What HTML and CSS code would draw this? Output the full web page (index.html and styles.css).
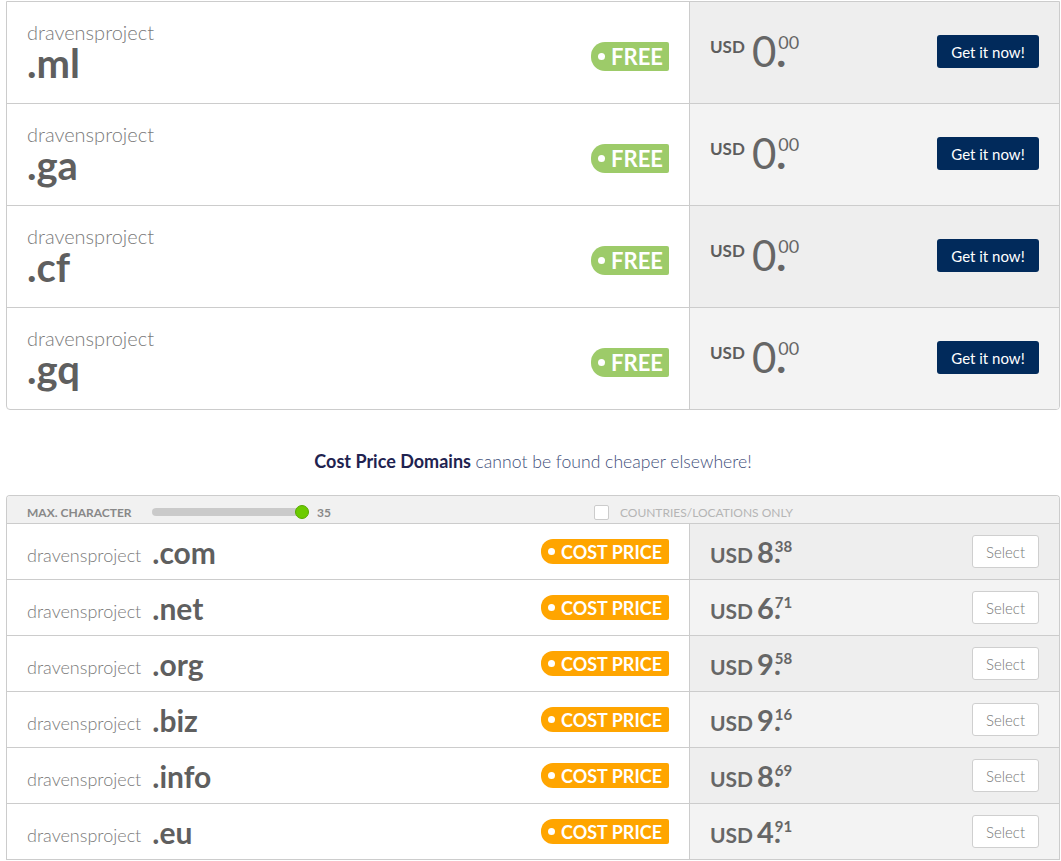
FILE: index.html
```html
<!DOCTYPE html>
<html lang="en">
<head>
<meta charset="utf-8">
<title>Domains</title>
<link rel="stylesheet" href="styles.css">
</head>
<body>
<div class="page">
  <div class="free-list">
    <div class="row">
      <div class="info">
        <div class="name"><div class="sld">dravensproject</div><div class="tld">.ml</div></div>
        <span class="badge badge-free"><i class="dot"></i>FREE</span>
      </div>
      <div class="buy">
        <div class="price price-lg"><span class="cur">USD</span><span class="int">0</span><span class="dec">.</span><span class="cents">00</span></div>
        <button class="btn-get">Get it now!</button>
      </div>
    </div>
    <div class="row">
      <div class="info">
        <div class="name"><div class="sld">dravensproject</div><div class="tld">.ga</div></div>
        <span class="badge badge-free"><i class="dot"></i>FREE</span>
      </div>
      <div class="buy">
        <div class="price price-lg"><span class="cur">USD</span><span class="int">0</span><span class="dec">.</span><span class="cents">00</span></div>
        <button class="btn-get">Get it now!</button>
      </div>
    </div>
    <div class="row">
      <div class="info">
        <div class="name"><div class="sld">dravensproject</div><div class="tld">.cf</div></div>
        <span class="badge badge-free"><i class="dot"></i>FREE</span>
      </div>
      <div class="buy">
        <div class="price price-lg"><span class="cur">USD</span><span class="int">0</span><span class="dec">.</span><span class="cents">00</span></div>
        <button class="btn-get">Get it now!</button>
      </div>
    </div>
    <div class="row">
      <div class="info">
        <div class="name"><div class="sld">dravensproject</div><div class="tld">.gq</div></div>
        <span class="badge badge-free"><i class="dot"></i>FREE</span>
      </div>
      <div class="buy">
        <div class="price price-lg"><span class="cur">USD</span><span class="int">0</span><span class="dec">.</span><span class="cents">00</span></div>
        <button class="btn-get">Get it now!</button>
      </div>
    </div>
  </div>

  <p class="note"><strong>Cost Price Domains</strong> <span class="rest">cannot be found cheaper elsewhere!</span></p>

  <div class="cost-list">
    <div class="filters">
      <span class="flabel">MAX. CHARACTER</span>
      <span class="slider"><span class="track"></span><span class="handle"></span></span>
      <span class="fval">35</span>
      <span class="check"><span class="box"></span><span class="clabel">COUNTRIES/LOCATIONS ONLY</span></span>
    </div>
    <div class="crow">
      <div class="cinfo">
        <div class="cname"><span class="csld">dravensproject</span><span class="ctld">.com</span></div>
        <span class="badge badge-cost"><i class="dot"></i>COST PRICE</span>
      </div>
      <div class="cbuy">
        <div class="price price-sm"><span class="cur">USD</span><span class="int">8</span><span class="dec">.</span><span class="cents">38</span></div>
        <button class="btn-select">Select</button>
      </div>
    </div>
    <div class="crow">
      <div class="cinfo">
        <div class="cname"><span class="csld">dravensproject</span><span class="ctld">.net</span></div>
        <span class="badge badge-cost"><i class="dot"></i>COST PRICE</span>
      </div>
      <div class="cbuy">
        <div class="price price-sm"><span class="cur">USD</span><span class="int">6</span><span class="dec">.</span><span class="cents">71</span></div>
        <button class="btn-select">Select</button>
      </div>
    </div>
    <div class="crow">
      <div class="cinfo">
        <div class="cname"><span class="csld">dravensproject</span><span class="ctld">.org</span></div>
        <span class="badge badge-cost"><i class="dot"></i>COST PRICE</span>
      </div>
      <div class="cbuy">
        <div class="price price-sm"><span class="cur">USD</span><span class="int">9</span><span class="dec">.</span><span class="cents">58</span></div>
        <button class="btn-select">Select</button>
      </div>
    </div>
    <div class="crow">
      <div class="cinfo">
        <div class="cname"><span class="csld">dravensproject</span><span class="ctld">.biz</span></div>
        <span class="badge badge-cost"><i class="dot"></i>COST PRICE</span>
      </div>
      <div class="cbuy">
        <div class="price price-sm"><span class="cur">USD</span><span class="int">9</span><span class="dec">.</span><span class="cents">16</span></div>
        <button class="btn-select">Select</button>
      </div>
    </div>
    <div class="crow">
      <div class="cinfo">
        <div class="cname"><span class="csld">dravensproject</span><span class="ctld">.info</span></div>
        <span class="badge badge-cost"><i class="dot"></i>COST PRICE</span>
      </div>
      <div class="cbuy">
        <div class="price price-sm"><span class="cur">USD</span><span class="int">8</span><span class="dec">.</span><span class="cents">69</span></div>
        <button class="btn-select">Select</button>
      </div>
    </div>
    <div class="crow">
      <div class="cinfo">
        <div class="cname"><span class="csld">dravensproject</span><span class="ctld">.eu</span></div>
        <span class="badge badge-cost"><i class="dot"></i>COST PRICE</span>
      </div>
      <div class="cbuy">
        <div class="price price-sm"><span class="cur">USD</span><span class="int">4</span><span class="dec">.</span><span class="cents">91</span></div>
        <button class="btn-select">Select</button>
      </div>
    </div>
  </div>
</div>
</body>
</html>
```

FILE: styles.css
```css
* { box-sizing: border-box; margin: 0; padding: 0; }
html, body { background: #fff; }
body { font-family: Lato, "Open Sans", "Liberation Sans", sans-serif; color: #666; }

.page { padding: 1px 1px 0 6px; }

/* ---------- free domains ---------- */
.free-list {
  border: 1px solid #ccc;
  border-radius: 0 0 4px 4px;
  overflow: hidden;
}
.row {
  display: grid;
  grid-template-columns: 682px 1fr;
  height: 102px;
  border-bottom: 1px solid #ccc;
}
.row:last-child { border-bottom: 0; height: 101px; }
.row:nth-child(odd) .buy { background: #eeeeee; }
.row:nth-child(even) .buy { background: #f3f3f3; }

.info {
  display: flex;
  align-items: center;
  justify-content: space-between;
  padding: 0 20px 0 20px;
}
.sld {
  font-size: 20px;
  line-height: 20px;
  font-weight: 300;
  color: #7a7a7a;
}
.tld {
  font-size: 40px;
  line-height: 40px;
  font-weight: 700;
  color: #5f5f5f;
  margin-top: 1px;
}

.badge {
  display: inline-flex;
  align-items: center;
  color: #fff;
  font-weight: 700;
  white-space: nowrap;
}
.badge .dot {
  display: inline-block;
  width: 7px;
  height: 7px;
  border-radius: 50%;
  background: #fff;
  margin-right: 6px;
}
.badge-free {
  height: 29px;
  margin-top: 8px;
  padding: 0 6px 0 7px;
  font-size: 22px;
  background: #9dcb69;
  border-radius: 14px 2px 2px 14px;
}
.badge-cost {
  height: 25px;
  padding: 0 7px 0 7px;
  font-size: 18px;
  background: #ffa500;
  border-radius: 12px 2px 2px 12px;
}

.buy {
  display: flex;
  align-items: center;
  justify-content: space-between;
  border-left: 1px solid #ccc;
  padding: 0 20px 0 20px;
}

.price { display: flex; align-items: flex-start; color: #666; }
.price span { line-height: 1; }

.price-lg { margin-top: -3px; }
.price-lg .cur { font-size: 17px; font-weight: 700; margin-top: 8px; margin-right: 7px; color: #5d5d5d; }
.price-lg .int { font-size: 42px; font-weight: 400; }
.price-lg .dec { font-size: 42px; font-weight: 700; }
.price-lg .cents { font-size: 18px; font-weight: 400; margin-top: 3px; margin-left: -8px; }

.btn-get {
  font-family: inherit;
  width: 102px;
  height: 33px;
  border: 0;
  border-radius: 3px;
  background: #012a5b;
  color: #fff;
  font-size: 15px;
  margin-top: -2px;
}

/* ---------- note ---------- */
.note {
  height: 85px;
  padding-top: 40px;
  text-align: center;
  font-size: 18px;
  line-height: 22px;
  color: #3b4a72;
}
.note strong { font-weight: 700; color: #1f2350; }
.note .rest { font-size: 17.6px; font-weight: 300; color: #3f4f7a; }

/* ---------- cost price domains ---------- */
.cost-list {
  border: 1px solid #ccc;
  border-bottom: 0;
  border-radius: 4px 4px 0 0;
  overflow: hidden;
}
.filters {
  display: flex;
  align-items: center;
  height: 28px;
  padding: 5px 0 0 20px;
  border-bottom: 1px solid #ccc;
  background: #f1f1f1;
  font-size: 12px;
}
.flabel {
  width: 125px;
  font-weight: 700;
  color: #888;
}
.slider {
  position: relative;
  width: 148px;
  height: 8px;
}
.track {
  display: block;
  width: 100%;
  height: 8px;
  border-radius: 4px;
  background: #cacaca;
}
.handle {
  position: absolute;
  left: 143px;
  top: -3px;
  width: 14px;
  height: 14px;
  border-radius: 50%;
  background: #6ccb00;
  border: 1px solid #58a800;
}
.fval {
  margin-left: 17px;
  font-weight: 700;
  color: #888;
}
.check {
  display: inline-flex;
  align-items: center;
  margin-left: 263px;
}
.box {
  width: 15px;
  height: 15px;
  border: 1px solid #ccc;
  border-radius: 2px;
  background: #fff;
  margin-right: 11px;
}
.clabel { color: #b5b5b5; }

.crow {
  display: grid;
  grid-template-columns: 682px 1fr;
  height: 56px;
  border-bottom: 1px solid #ccc;
}
.crow:nth-child(even) .cbuy { background: #eeeeee; }
.crow:nth-child(odd) .cbuy { background: #f3f3f3; }

.cinfo {
  display: flex;
  align-items: center;
  justify-content: space-between;
  padding: 0 20px 0 20px;
}
.cname { font-size: 30px; line-height: 30px; white-space: nowrap; }
.csld {
  font-size: 18px;
  line-height: 18px;
  font-weight: 300;
  color: #7a7a7a;
  vertical-align: 2px;
  margin-right: 11px;
}
.ctld {
  font-size: 30px;
  font-weight: 700;
  color: #5f5f5f;
}

.cbuy {
  display: flex;
  align-items: center;
  justify-content: space-between;
  border-left: 1px solid #ccc;
  padding: 0 20px 0 20px;
}
.price-sm .cur { font-size: 21px; font-weight: 700; margin-top: 7px; margin-right: 4px; }
.price-sm .int { font-size: 29px; font-weight: 700; }
.price-sm .dec { font-size: 29px; font-weight: 700; }
.price-sm .cents { font-size: 15px; font-weight: 700; margin-top: 2px; margin-left: -6px; }

.btn-select {
  font-family: inherit;
  width: 67px;
  height: 33px;
  border: 1px solid #cfcfcf;
  border-radius: 3px;
  background: #fff;
  color: #777;
  font-size: 15px;
  font-weight: 300;
}
```
